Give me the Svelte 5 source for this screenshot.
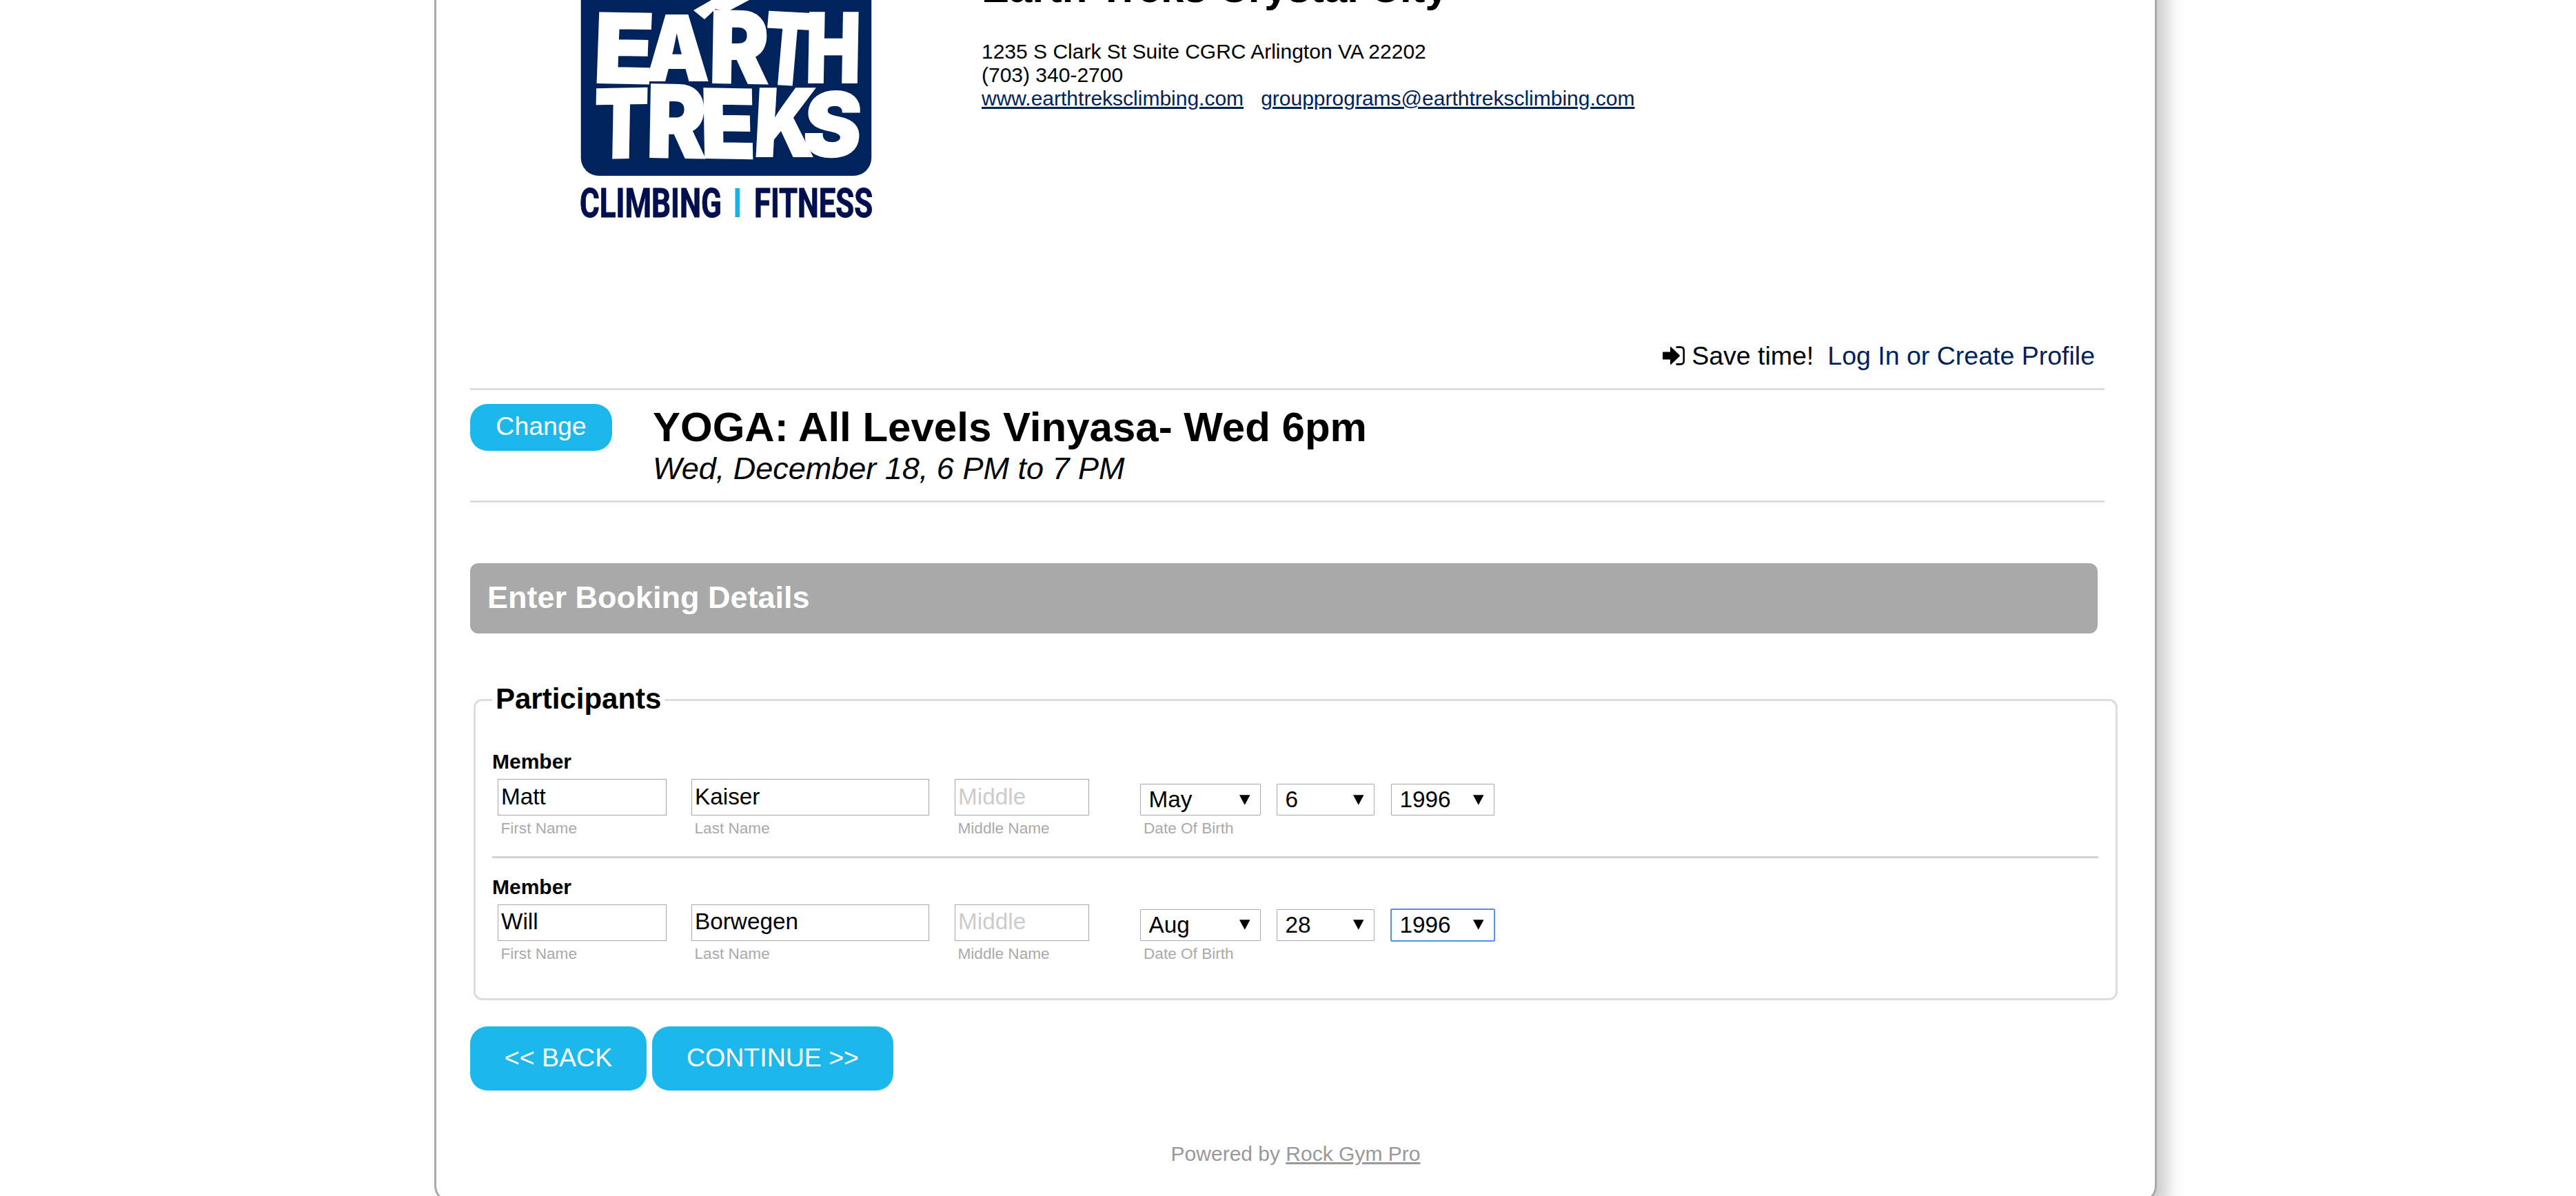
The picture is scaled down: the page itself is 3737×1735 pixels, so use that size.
<script>
  const logoLetters = [
    { ch: 'E', x: 40, y: 120, w: 87, h: 102, skew: -1, rot: 1 },
    { ch: 'A', x: 116, y: 117, w: 93, h: 95, skew: 0, rot: 0 },
    { ch: 'R', x: 208, y: 120, w: 87, h: 105, skew: 0, rot: 1 },
    { ch: 'T', x: 284, y: 121, w: 70, h: 105, skew: -2, rot: 3 },
    { ch: 'H', x: 348, y: 120, w: 80, h: 102, skew: -1, rot: 0 },
    { ch: 'T', x: 41, y: 230, w: 79, h: 101, skew: -2, rot: -1 },
    { ch: 'R', x: 117, y: 228, w: 87, h: 106, skew: 0, rot: 1 },
    { ch: 'E', x: 197, y: 229, w: 80, h: 101, skew: 2, rot: 1 },
    { ch: 'K', x: 272, y: 227, w: 89, h: 99, skew: -3, rot: 0 },
    { ch: 'S', x: 343, y: 227, w: 84, h: 94, skew: -4, rot: 0 }
  ];

  const participants = [
    { first: 'Matt', last: 'Kaiser', month: 'May', day: '6', year: '1996', focus: false },
    { first: 'Will', last: 'Borwegen', month: 'Aug', day: '28', year: '1996', focus: true }
  ];
</script>

{#snippet picker(value, kind, focused)}
  <div class="picker {kind}" class:focused>
    <select aria-label={kind}><option>{value}</option></select>
    <svg class="caret" viewBox="0 0 16 15" aria-hidden="true"><path d="M0 0H16L8 15Z" /></svg>
  </div>
{/snippet}

<div class="page">
  <main class="card">
    <header class="head">
      <svg class="logo" viewBox="0 0 470 340" role="img" aria-label="Earth Treks">
        <rect x="22.7" y="-80" width="421.5" height="335" rx="26" fill="#00235b" />
        <path d="M186 15L212 0H267L235 17L218 13L202 28Z" fill="#fff" />
        {#each logoLetters as l}
          <text
            class="rock"
            transform="translate({l.x} {l.y}) rotate({l.rot}) skewX({l.skew})"
            font-size={l.h / 0.729}
            textLength={l.w}
            lengthAdjust="spacingAndGlyphs">{l.ch}</text>
        {/each}
        <text class="tag" x="21" y="314.5" textLength="206" lengthAdjust="spacingAndGlyphs">CLIMBING</text>
        <rect x="246.5" y="273" width="6.5" height="42" fill="#14b1ea" />
        <text class="tag" x="274" y="314.5" textLength="172" lengthAdjust="spacingAndGlyphs">FITNESS</text>
      </svg>
      <div class="info">
        <h1>Earth Treks Crystal City</h1>
        <div>1235 S Clark St Suite CGRC Arlington VA 22202</div>
        <div>(703) 340-2700</div>
        <div class="links">
          <a href="#site">www.earthtreksclimbing.com</a>
          <a href="#mail">groupprograms@earthtreksclimbing.com</a>
        </div>
      </div>
    </header>

    <div class="login">
      <svg class="signin" viewBox="0 0 32 28" aria-hidden="true">
        <path d="M1 8.5H11V2Q11 .4 12.4 1.4L24.4 13Q25.3 14 24.4 15L12.4 26.6Q11 27.6 11 26V19.5H1Q0 19.5 0 18.5V9.5Q0 8.5 1 8.5Z" />
        <path d="M19.5 1.6H26Q30.7 1.6 30.7 6.4V21.6Q30.7 26.4 26 26.4H19.5" fill="none" stroke="#000" stroke-width="2.6" />
      </svg>
      <span>Save time!</span>
      <a href="#login">Log In or Create Profile</a>
    </div>

    <section class="event">
      <button class="btn change">Change</button>
      <div>
        <h2>YOGA: All Levels Vinyasa- Wed 6pm</h2>
        <p class="when">Wed, December 18, 6 PM to 7 PM</p>
      </div>
    </section>

    <h3 class="bar">Enter Booking Details</h3>

    <fieldset>
      <legend>Participants</legend>
      {#each participants as p}
        <div class="participant">
          <div class="member">Member</div>
          <div class="fields">
            <label class="first"><input value={p.first} /><span>First Name</span></label>
            <label class="last"><input value={p.last} /><span>Last Name</span></label>
            <label class="middle"><input placeholder="Middle" /><span>Middle Name</span></label>
            <div class="dob">
              <div class="pickers">
                {@render picker(p.month, 'month', false)}
                {@render picker(p.day, 'day', false)}
                {@render picker(p.year, 'year', p.focus)}
              </div>
              <span>Date Of Birth</span>
            </div>
          </div>
        </div>
      {/each}
    </fieldset>

    <div class="actions">
      <button class="btn back">&lt;&lt; BACK</button>
      <button class="btn next">CONTINUE &gt;&gt;</button>
    </div>

    <footer>Powered by <a href="#rgp">Rock Gym Pro</a></footer>
  </main>
</div>

<style>
  :global(body) {
    margin: 0;
    background: #fff;
  }
  .page {
    display: flow-root;
    box-sizing: border-box;
    height: 1735px;
    padding-left: 630px;
    overflow: hidden;
    font-family: 'Liberation Sans', Arial, sans-serif;
    color: #000;
  }
  .card {
    box-sizing: border-box;
    display: flex;
    flex-direction: column;
    width: 2499px;
    height: 1845px;
    margin-top: -100px;
    padding: 100px 0 0 49px;
    border: 3px solid #a9a9a9;
    border-top: 0;
    border-radius: 0 0 25px 25px;
    background: #fefefe;
    box-shadow: 15px 15px 25px #ccc;
  }
  h1, h2, h3, p {
    margin: 0;
  }
  a {
    color: #00235b;
  }
  .head {
    display: flex;
    height: 494px;
    padding-left: 138px;
  }
  .logo {
    flex: none;
    width: 470px;
    height: 340px;
    margin-right: 134px;
  }
  .rock {
    font-family: Inter, 'Open Sans', sans-serif;
    font-weight: 900;
    fill: #fff;
    stroke: #fff;
    stroke-width: 2;
  }
  .tag {
    font-family: Roboto, sans-serif;
    font-weight: 700;
    font-size: 58.5px;
    fill: #000f4d;
    stroke: #000f4d;
    stroke-width: 1;
  }
  .info {
    font-size: 30px;
    line-height: 34px;
  }
  h1 {
    margin: -51px 0 41px;
    font-size: 60px;
    line-height: 68px;
  }
  .links {
    display: flex;
    gap: 25px;
  }
  .login {
    display: flex;
    align-items: center;
    justify-content: flex-end;
    width: 2357px;
    height: 44px;
    margin-bottom: 25px;
    font-size: 37.5px;
    line-height: 44px;
  }
  .signin {
    width: 32px;
    height: 28px;
    margin-right: 10px;
  }
  .login a {
    margin-left: 20px;
    text-decoration: none;
  }
  .event {
    display: flex;
    align-items: flex-start;
    gap: 59px;
    width: 2371px;
    box-sizing: border-box;
    height: 166px;
    padding-top: 20px;
    border: solid #ddd;
    border-width: 3px 0;
  }
  .btn {
    padding: 0;
    border: 0;
    border-radius: 25px;
    background: #1cb7eb;
    color: #fff;
    font: 37.5px 'Liberation Sans', Arial, sans-serif;
  }
  .change {
    width: 206px;
    height: 68px;
    padding-bottom: 3px;
  }
  h2 {
    font-size: 60px;
    line-height: 68px;
  }
  .when {
    font-size: 45px;
    font-style: italic;
    line-height: 52px;
  }
  .bar {
    box-sizing: border-box;
    width: 2361px;
    height: 102px;
    margin-top: 88px;
    padding-left: 25px;
    border-radius: 12px;
    background: #a9a9a9;
    color: #fff;
    font-size: 45px;
    line-height: 100px;
  }
  fieldset {
    box-sizing: border-box;
    width: 2385px;
    height: 460px;
    margin: 72px 0 0 5px;
    padding: 49px 25px 0 24px;
    border: 3px solid #ddd;
    border-radius: 12px;
  }
  legend {
    box-sizing: border-box;
    height: 48px;
    padding: 0 5px;
    font-size: 42px;
    font-weight: 700;
    line-height: 46px;
  }
  .participant {
    box-sizing: border-box;
    height: 181.5px;
  }
  .participant:not(:last-child) {
    height: 156.5px;
    margin-bottom: 25px;
    border-bottom: 3px solid #d3d3d3;
  }
  .member {
    margin-bottom: 8px;
    font-size: 30px;
    font-weight: 700;
    line-height: 34px;
  }
  .fields {
    display: flex;
    padding-left: 8px;
    color: #aaa;
    font-size: 22.6px;
    line-height: 26px;
  }
  .fields label {
    display: flex;
    flex-direction: column;
    gap: 6px;
  }
  .fields label span {
    padding-left: 4.5px;
  }
  .first {
    width: 245px;
    margin-right: 36px;
  }
  .last {
    width: 345px;
    margin-right: 37px;
  }
  .middle {
    width: 195px;
    margin-right: 74px;
  }
  input {
    box-sizing: border-box;
    width: 100%;
    height: 53px;
    padding: 0 2px 2px 4px;
    border: 1px solid #a9a9a9;
    border-radius: 0;
    outline: 0;
    background: #fff;
    color: #000;
    font: 33.33px 'Liberation Sans', Arial, sans-serif;
  }
  input::placeholder {
    color: #ccc;
  }
  .dob {
    padding-top: 7px;
  }
  .dob > span {
    display: block;
    padding: 6px 0 0 5px;
  }
  .pickers {
    display: flex;
  }
  .picker {
    display: grid;
    box-sizing: border-box;
    height: 46px;
    align-items: center;
    border: 1px solid #a9a9a9;
    border-radius: 1px;
    background: #fff;
  }
  .picker.focused {
    border-color: #4d90fe;
    box-shadow: 0 0 0 1px #4d90fe;
  }
  .picker select,
  .caret {
    grid-area: 1 / 1;
  }
  .picker select {
    appearance: none;
    width: 100%;
    height: 44px;
    padding: 0 0 1px 11.5px;
    border: 0;
    outline: 0;
    background: transparent;
    color: #000;
    font: 33.33px 'Liberation Sans', Arial, sans-serif;
  }
  .caret {
    justify-self: end;
    width: 15.5px;
    height: 15px;
    margin-right: 15px;
  }
  .month {
    width: 175px;
    margin-right: 23px;
  }
  .day {
    width: 142px;
    margin-right: 24px;
  }
  .year {
    width: 150px;
  }
  .actions {
    display: flex;
    gap: 8px;
    margin-top: 38px;
  }
  .actions .btn {
    height: 93px;
    padding-bottom: 2px;
  }
  .back {
    width: 256px;
  }
  .next {
    width: 350px;
  }
  footer {
    margin: 75px 49px 0 0;
    color: #999;
    font-size: 30px;
    line-height: 34px;
    text-align: center;
  }
  footer a {
    color: #999;
  }
</style>
